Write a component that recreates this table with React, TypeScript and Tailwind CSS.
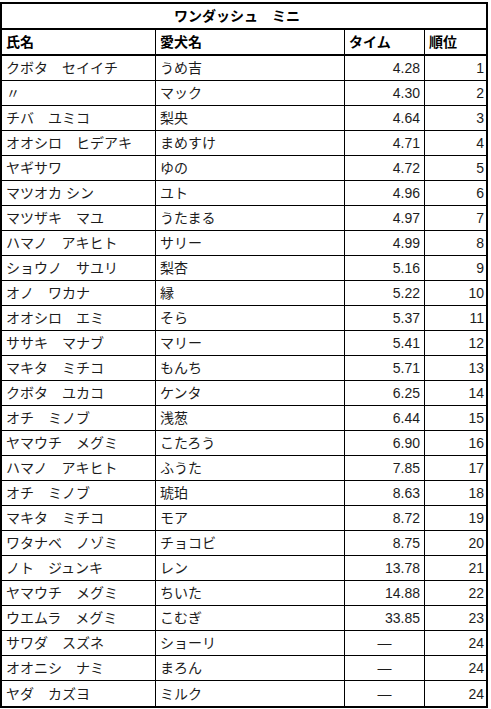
import React from "react";

interface Entry {
  owner: string;
  dog: string;
  time: string;
  rank: number;
}

const entries: Entry[] = [
  { owner: "クボタ　セイイチ", dog: "うめ吉", time: "4.28", rank: 1 },
  { owner: "〃", dog: "マック", time: "4.30", rank: 2 },
  { owner: "チバ　ユミコ", dog: "梨央", time: "4.64", rank: 3 },
  { owner: "オオシロ　ヒデアキ", dog: "まめすけ", time: "4.71", rank: 4 },
  { owner: "ヤギサワ", dog: "ゆの", time: "4.72", rank: 5 },
  { owner: "マツオカ シン", dog: "ユト", time: "4.96", rank: 6 },
  { owner: "マツザキ　マユ", dog: "うたまる", time: "4.97", rank: 7 },
  { owner: "ハマノ　アキヒト", dog: "サリー", time: "4.99", rank: 8 },
  { owner: "ショウノ　サユリ", dog: "梨杏", time: "5.16", rank: 9 },
  { owner: "オノ　ワカナ", dog: "縁", time: "5.22", rank: 10 },
  { owner: "オオシロ　エミ", dog: "そら", time: "5.37", rank: 11 },
  { owner: "ササキ　マナブ", dog: "マリー", time: "5.41", rank: 12 },
  { owner: "マキタ　ミチコ", dog: "もんち", time: "5.71", rank: 13 },
  { owner: "クボタ　ユカコ", dog: "ケンタ", time: "6.25", rank: 14 },
  { owner: "オチ　ミノブ", dog: "浅葱", time: "6.44", rank: 15 },
  { owner: "ヤマウチ　メグミ", dog: "こたろう", time: "6.90", rank: 16 },
  { owner: "ハマノ　アキヒト", dog: "ふうた", time: "7.85", rank: 17 },
  { owner: "オチ　ミノブ", dog: "琥珀", time: "8.63", rank: 18 },
  { owner: "マキタ　ミチコ", dog: "モア", time: "8.72", rank: 19 },
  { owner: "ワタナベ　ノゾミ", dog: "チョコビ", time: "8.75", rank: 20 },
  { owner: "ノト　ジュンキ", dog: "レン", time: "13.78", rank: 21 },
  { owner: "ヤマウチ　メグミ", dog: "ちいた", time: "14.88", rank: 22 },
  { owner: "ウエムラ　メグミ", dog: "こむぎ", time: "33.85", rank: 23 },
  { owner: "サワダ　スズネ", dog: "ショーリ", time: "", rank: 24 },
  { owner: "オオニシ　ナミ", dog: "まろん", time: "", rank: 24 },
  { owner: "ヤダ　カズヨ", dog: "ミルク", time: "", rank: 24 },
];

const cols = "grid grid-cols-[154px_189px_80px_1fr]";

export default function App() {
  return (
    <div
      className="min-h-[709px] w-[491px] bg-white pt-[2px]"
      style={{ fontFamily: '"Liberation Sans", "Noto Sans CJK JP", sans-serif' }}
    >
      <div className="w-[488px] border-2 border-black text-[14px] leading-none text-[#1c1c1c]">
        <div className="flex h-[26px] items-center justify-center border-b-2 border-black pr-[14px] font-bold text-black">
          ワンダッシュ　ミニ
        </div>

        <div className={`${cols} h-[26px] border-b-2 border-black font-bold text-black`}>
          <div className="flex items-center border-r border-black pl-[4px]">氏名</div>
          <div className="flex items-center border-r border-black pl-[4px]">愛犬名</div>
          <div className="flex items-center border-r border-black pl-[4px]">タイム</div>
          <div className="flex items-center pl-[4px]">順位</div>
        </div>

        {entries.map((entry, i) => (
          <div
            key={i}
            className={`${cols} h-[25px] ${i < entries.length - 1 ? "border-b border-black" : ""}`}
          >
            <div className="flex items-center border-r border-black pl-[4px]">{entry.owner}</div>
            <div className="flex items-center border-r border-black pl-[4px]">{entry.dog}</div>
            {entry.time ? (
              <div className="flex items-center justify-end border-r border-black pr-[4px]">
                {entry.time}
              </div>
            ) : (
              <div className="flex items-center justify-center border-r border-black">—</div>
            )}
            <div className="flex items-center justify-end pr-[2px]">{entry.rank}</div>
          </div>
        ))}
      </div>
    </div>
  );
}
